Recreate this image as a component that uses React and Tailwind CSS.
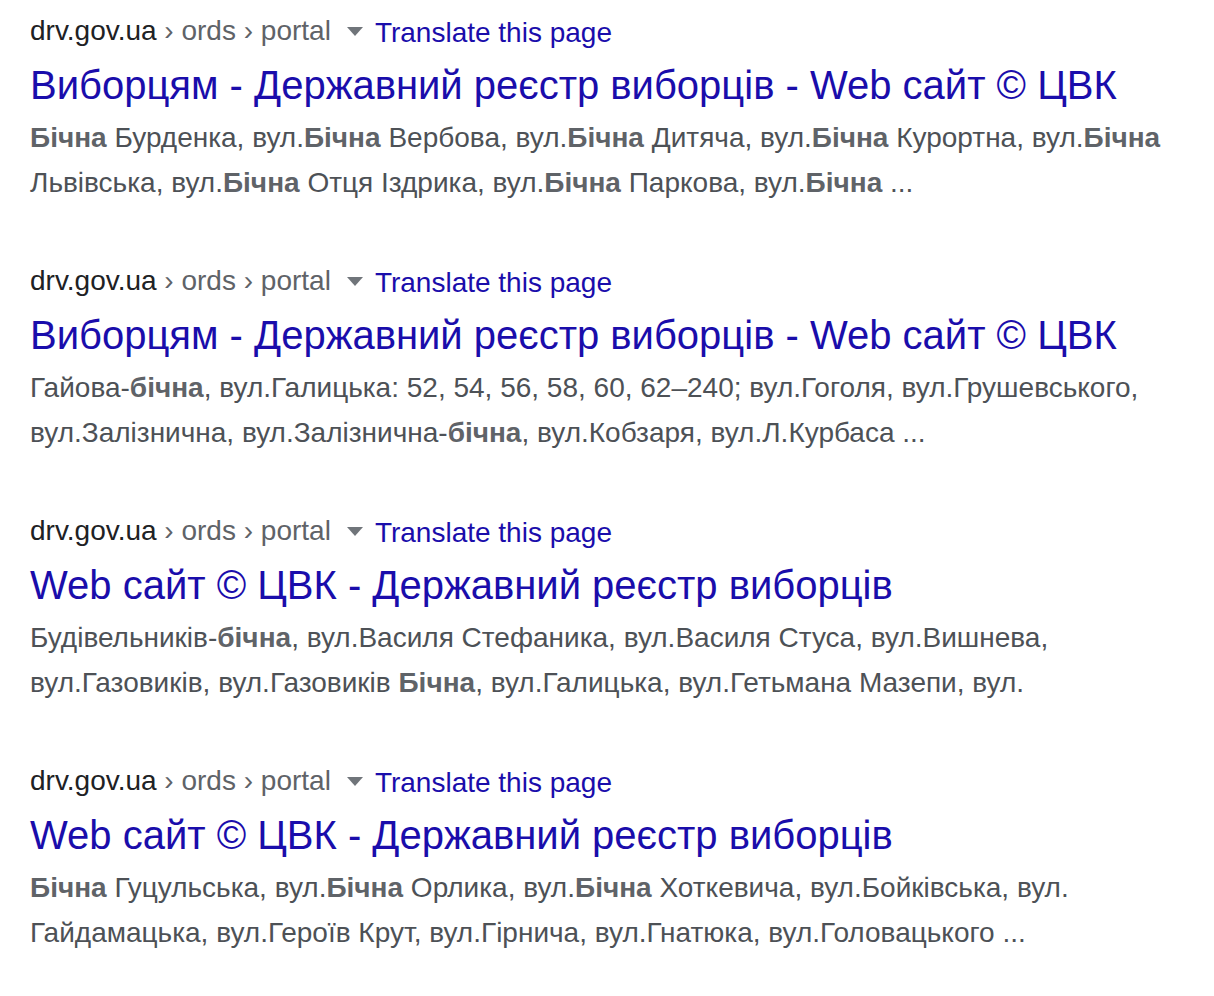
import React from "react";

const results = [
  {
    title: "Виборцям - Державний реєстр виборців - Web сайт © ЦВК",
    lines: [
      [["b", "Бічна"], " Бурденка, вул.", ["b", "Бічна"], " Вербова, вул.", ["b", "Бічна"], " Дитяча, вул.", ["b", "Бічна"], " Курортна, вул.", ["b", "Бічна"]],
      ["Львівська, вул.", ["b", "Бічна"], " Отця Іздрика, вул.", ["b", "Бічна"], " Паркова, вул.", ["b", "Бічна"], " ..."],
    ],
  },
  {
    title: "Виборцям - Державний реєстр виборців - Web сайт © ЦВК",
    lines: [
      ["Гайова-", ["b", "бічна"], ", вул.Галицька: 52, 54, 56, 58, 60, 62–240; вул.Гоголя, вул.Грушевського,"],
      ["вул.Залізнична, вул.Залізнична-", ["b", "бічна"], ", вул.Кобзаря, вул.Л.Курбаса ..."],
    ],
  },
  {
    title: "Web сайт © ЦВК - Державний реєстр виборців",
    lines: [
      ["Будівельників-", ["b", "бічна"], ", вул.Василя Стефаника, вул.Василя Стуса, вул.Вишнева,"],
      ["вул.Газовиків, вул.Газовиків ", ["b", "Бічна"], ", вул.Галицька, вул.Гетьмана Мазепи, вул."],
    ],
  },
  {
    title: "Web сайт © ЦВК - Державний реєстр виборців",
    lines: [
      [["b", "Бічна"], " Гуцульська, вул.", ["b", "Бічна"], " Орлика, вул.", ["b", "Бічна"], " Хоткевича, вул.Бойківська, вул."],
      ["Гайдамацька, вул.Героїв Крут, вул.Гірнича, вул.Гнатюка, вул.Головацького ..."],
    ],
  },
];

function Result({ r }) {
  return (
    <div className="h-[250px]">
      <div className="flex items-center h-[40px] text-[28px] whitespace-nowrap">
        <span className="text-[#202124]">drv.gov.ua</span>
        <span className="text-[#5f6368]">&nbsp;› ords › portal</span>
        <svg width="16" height="10" viewBox="0 0 16 10" className="ml-[16px] mr-[12px] mt-[2px]">
          <path d="M0 0 L16 0 L8 9 Z" fill="#70757a" />
        </svg>
        <span className="text-[#1a0dab] mt-[3px]">Translate this page</span>
      </div>
      <div className="mt-[6px] leading-[56px] text-[40px] text-[#1a0dab] whitespace-nowrap">
        {r.title}
      </div>
      <div className="mt-[2px] text-[28px] leading-[45px] text-[#4d5156]">
        {r.lines.map((line, i) => (
          <div key={i} className="whitespace-nowrap">
            {line.map((p, j) =>
              typeof p === "string" ? (
                <span key={j}>{p}</span>
              ) : (
                <b key={j} className="font-bold text-[#5f6368]">{p[1]}</b>
              )
            )}
          </div>
        ))}
      </div>
    </div>
  );
}

export default function App() {
  return (
    <div
      className="min-h-screen bg-white pl-[30px] pt-[11px]"
      style={{ fontFamily: '"Liberation Sans", Arial, sans-serif' }}
    >
      {results.map((r, i) => (
        <Result key={i} r={r} />
      ))}
    </div>
  );
}
